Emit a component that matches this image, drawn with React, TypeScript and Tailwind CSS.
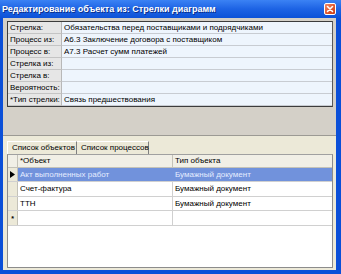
import React from "react";

const font = { fontFamily: '"Liberation Sans", Arial, sans-serif' };

const props: [string, string][] = [
  ["Стрелка:", "Обязательства перед поставщиками и подрядчиками"],
  ["Процесс из:", "А6.3 Заключение договора с поставщиком"],
  ["Процесс в:", "А7.3 Расчет сумм платежей"],
  ["Стрелка из:", ""],
  ["Стрелка в:", ""],
  ["Вероятность:", ""],
  ["*Тип стрелки:", "Связь предшествования"],
];

const rows: { a: string; b: string; sel?: boolean; h: string }[] = [
  { a: "Акт выполненных работ", b: "Бумажный документ", sel: true, h: "h-[14px]" },
  { a: "Счет-фактура", b: "Бумажный документ", h: "h-[15px]" },
  { a: "ТТН", b: "Бумажный документ", h: "h-[14px]" },
];

export default function App() {
  return (
    <div
      className="w-[341px] h-[274px] bg-[#0b4fd8] flex flex-col overflow-hidden text-[8px] text-black leading-none"
      style={font}
    >
      {/* Title bar */}
      <div className="h-[18px] shrink-0 flex items-center justify-between pl-[2px] pr-[5px] bg-gradient-to-b from-[#3b82f4] via-[#1d63e4] to-[#0c52d8]">
        <span className="text-white font-bold text-[9px] [text-shadow:1px_1px_0_#0a2f8a]">
          Редактирование объекта из: Стрелки диаграмм
        </span>
        <div className="w-[12px] h-[12px] rounded-[2px] border border-white bg-gradient-to-br from-[#f08a6a] via-[#e35a30] to-[#c83c14] flex items-center justify-center">
          <svg width="8" height="8" viewBox="0 0 8 8">
            <path d="M1.5 1.5 L6.5 6.5 M6.5 1.5 L1.5 6.5" stroke="white" strokeWidth="1.6" strokeLinecap="round" />
          </svg>
        </div>
      </div>

      {/* Body */}
      <div className="flex-1 flex flex-col ml-[3px] mr-[5px] mb-[4px] bg-[#ece9d8]">
        {/* Upper panel */}
        <div className="h-[118px] shrink-0 bg-[#d4d0c8] border-b border-[#9c9a94] pt-[3px] pl-[4px] pr-[3px]">
          <div className="border border-[#3c3c3c] border-r-[#5a5a5a] bg-white">
            {props.map(([l, v], i) => (
              <div key={i} className="flex h-[12px]">
                <div className="w-[54px] shrink-0 bg-[#e6e6e6] border-b border-[#c4c4c4] border-r border-r-[#b8b8b8] pl-[2px] flex items-center whitespace-nowrap">
                  {l}
                </div>
                <div className="flex-1 bg-[#eef5fd] border-b border-[#c8ccd2] pl-[2px] flex items-center whitespace-nowrap">
                  {v}
                </div>
              </div>
            ))}
          </div>
        </div>

        {/* Lower panel */}
        <div className="flex-1 flex flex-col pt-[5px] pl-[4px] pr-[3px] pb-[2px]">
          {/* Tabs */}
          <div className="flex h-[13px] shrink-0">
            <div className="w-[70px] border-l border-t border-white border-r border-r-[#808080] bg-[#ece9d8] flex items-center pl-[4px] whitespace-nowrap">
              Список объектов
            </div>
            <div className="w-[72px] border-t border-white border-r border-r-[#808080] bg-[#ece9d8] flex items-center pl-[4px] whitespace-nowrap">
              Список процессов
            </div>
          </div>

          {/* Grid */}
          <div className="flex-1 border border-[#8c8c8c] border-t-[#a0a0a0] bg-white flex flex-col">
            {/* Header */}
            <div className="flex h-[13px] shrink-0 bg-[#f1efe6] border-b border-[#c4c2b8]">
              <div className="w-[10px] shrink-0 border-r border-[#c4c2b8]" />
              <div className="w-[155px] shrink-0 border-r border-[#c4c2b8] pl-[2px] flex items-center">*Объект</div>
              <div className="flex-1 pl-[2px] flex items-center">Тип объекта</div>
            </div>
            {rows.map((r, i) => (
              <div key={i} className={`flex ${r.h} shrink-0 border-b border-[#d0d0d0]`}>
                <div className="w-[10px] shrink-0 bg-[#ece9d8] border-r border-[#c4c2b8] flex items-center justify-center">
                  {r.sel && (
                    <svg width="5" height="7" viewBox="0 0 5 7">
                      <path d="M0 0 L5 3.5 L0 7 Z" fill="black" />
                    </svg>
                  )}
                </div>
                <div
                  className={`w-[155px] shrink-0 border-r pl-[2px] flex items-center whitespace-nowrap ${
                    r.sel ? "bg-[#7192dc] text-[#e4ecff] border-[#7192dc]" : "border-[#d0d0d0]"
                  }`}
                >
                  {r.a}
                </div>
                <div
                  className={`flex-1 pl-[2px] flex items-center whitespace-nowrap ${
                    r.sel ? "bg-[#7192dc] text-[#e4ecff]" : ""
                  }`}
                >
                  {r.b}
                </div>
              </div>
            ))}
            <div className="flex h-[15px] shrink-0 border-b border-[#d0d0d0]">
              <div className="w-[10px] shrink-0 bg-[#ece9d8] border-r border-[#c4c2b8] flex items-center justify-center text-[7px] font-bold">
                *
              </div>
              <div className="w-[155px] shrink-0 border-r border-[#d0d0d0]" />
              <div className="flex-1" />
            </div>
          </div>
        </div>
      </div>
    </div>
  );
}
